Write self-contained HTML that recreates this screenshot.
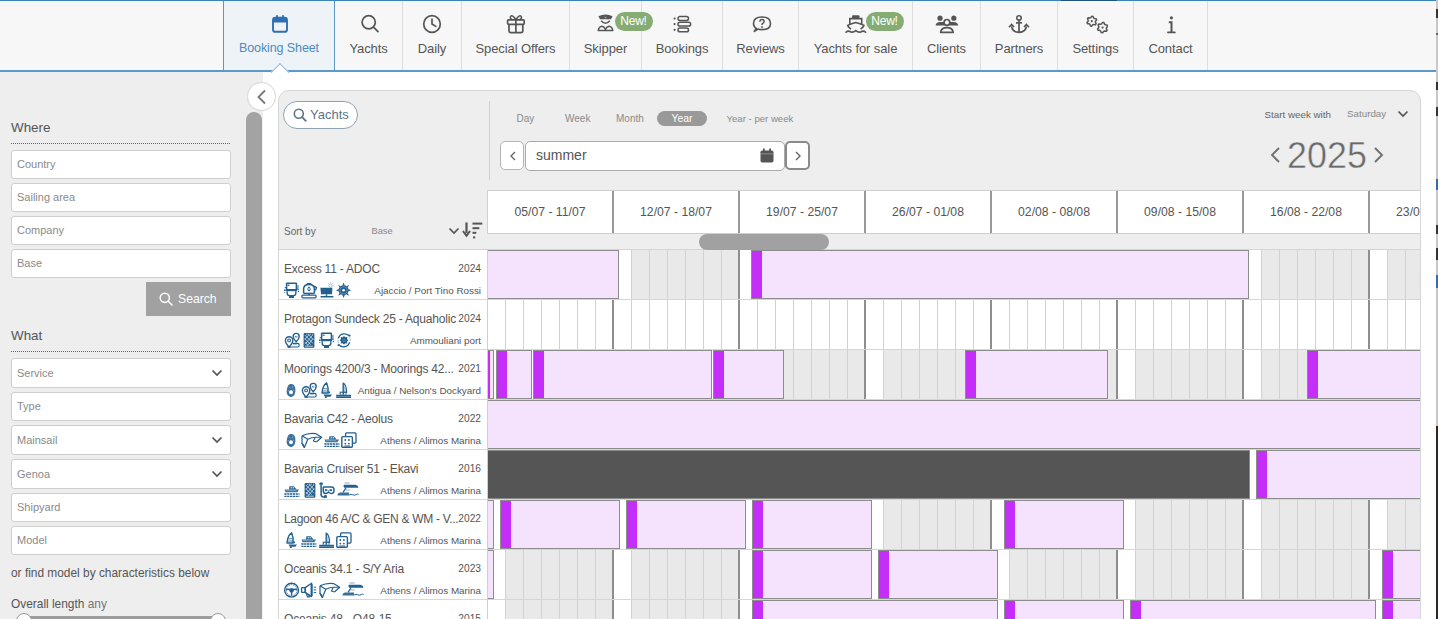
<!DOCTYPE html>
<html><head><meta charset="utf-8"><style>
*{box-sizing:border-box;margin:0;padding:0}
html,body{width:1438px;height:619px;overflow:hidden;background:#fff;font-family:"Liberation Sans",sans-serif;position:relative}
#nav{position:absolute;left:0;top:0;width:1436px;height:72px;background:#f7f7f7;border-top:1px solid #3a83bd;border-bottom:2px solid #5b9ac7}
.ni{position:absolute;top:0;height:69px;border-right:1px solid #dedede}
.ni.act{background:#eef3f8;border-left:1px solid #5b97c6;border-right:1px solid #5b97c6}
.nt{position:absolute;left:0;right:0;top:40px;text-align:center;font-size:13px;color:#555;white-space:nowrap;letter-spacing:-0.1px}
.ni.act .nt{color:#4d8ac4;font-size:12.5px}
.badge{position:absolute;top:11px;width:38px;height:19px;border-radius:10px;background:#85ad73;color:#fff;font-size:12px;line-height:19px;text-align:center;letter-spacing:-0.2px}
#notch{position:absolute;left:271px;top:62px;width:18px;height:10px;overflow:hidden}
#notch:before{content:"";position:absolute;left:2px;top:3px;width:13px;height:13px;background:#fff;border-left:1.2px solid #93badb;border-top:1.2px solid #93badb;transform:rotate(45deg)}
#side{position:absolute;left:0;top:72px;width:263px;height:547px;background:#eeeeee}
.h3{position:absolute;left:11px;font-size:13.4px;color:#555;padding-top:1.5px}
.dots{position:absolute;left:11px;width:220px;height:1px;background-image:linear-gradient(to right,#666 50%,transparent 50%);background-size:2px 1px}
.inp{position:absolute;left:11px;width:220px;background:#fff;border:1px solid #cfcfcf;border-radius:3px;font-size:11px;color:#8a8a8a;padding-left:5px}
.inp span{display:block}
#sbtn{position:absolute;left:146px;top:282px;width:85px;height:34px;background:#a1a1a1;color:#fff;font-size:12.2px}
#sbtn span{position:absolute;left:32px;top:10px}
.ptxt{position:absolute;left:11px;font-size:11.9px;color:#555;white-space:nowrap;padding-top:1.5px}
#track{position:absolute;left:20px;top:616px;width:200px;height:6px;background:#9c9c9c;border-radius:3px}
.knob{position:absolute;top:613px;width:16px;height:16px;border-radius:50%;background:#fff;border:1px solid #999}
#vthumb{position:absolute;left:246px;top:40px;width:16px;height:600px;background:#a3a3a3;border-radius:8px}
#side .h3,#side .dots,#side .inp,#side #sbtn,#side .ptxt,#side #track,#side .knob{margin-top:-72px}
#vthumb{top:40px}
#collapse{position:absolute;left:247px;top:82px;width:29px;height:29px;border-radius:50%;background:#fff;border:1px solid #dadada;box-shadow:0 0 1px rgba(0,0,0,.1)}
#panel{position:absolute;left:278px;top:90px;width:1143px;height:600px;background:#eeeeee;border:1px solid #d6d6d6;border-radius:11px}
#ypill{position:absolute;left:283px;top:101px;width:75px;height:28px;border-radius:14px;background:#fff;border:1px solid #8fa3b2;color:#5d7586;font-size:13px}
#ypill span{position:absolute;left:26px;top:5px}
.tab{position:absolute;top:112.5px;font-size:10px;color:#8a8a8a;white-space:nowrap}
.tab:last-of-type{}
#yearpill{position:absolute;left:657px;top:111px;width:50px;height:15px;border-radius:8px;background:#999;color:#fff;font-size:10.3px;line-height:15px;text-align:center}
.nbtn{position:absolute;top:141px;height:29px;background:#fff;border:1px solid #b5b5b5;border-radius:5px}
.nbtn.act2{border:2px solid #8a8a8a}
.nbtn.act2 svg{left:7px!important;top:8px!important}
#summer{position:absolute;left:525px;top:141px;width:260px;height:30px;background:#fff;border:1px solid #aaa;border-radius:5px}
#summer span{position:absolute;left:10px;top:5px;font-size:14px;color:#555}
.sm{position:absolute;font-size:9.8px;white-space:nowrap}
#year{position:absolute;left:1287px;top:136px;font-size:37px;color:#6a6a6a;-webkit-text-stroke:0.45px #eeeeee;paint-order:normal;line-height:40px;transform:scaleX(0.97);transform-origin:0 0}
#whead{position:absolute;left:487px;top:190px;width:933px;height:44px;background:#fff;border-top:1px solid #cfcfcf;border-bottom:1px solid #cfcfcf;border-left:1px solid #d0d0d0;
 background-image:linear-gradient(to right,transparent 124px,#999 124px,#999 126px);background-size:126px 100%;background-position:0 0}
#wclip{position:absolute;left:488px;top:191px;width:932px;height:42px;overflow:hidden}
.wk{position:absolute;top:14px;width:126px;margin-left:-1px;text-align:center;font-size:12.2px;color:#555;white-space:nowrap}
#hthumb{position:absolute;left:699px;top:234px;width:130px;height:16px;border-radius:8px;background:#a1a1a1;z-index:2}
#tseg{position:absolute;left:1061px;top:0;width:56px;height:1px;background:#1f5484}
#list{position:absolute;left:279px;top:249px;width:208px;height:400px;background:#fff;border-top:1px solid #d4d4d4}
.yr{position:absolute;left:0;width:208px;height:50px;border-bottom:1px solid #d8d8d8}
.yn{position:absolute;left:5px;top:11.5px;font-size:12px;letter-spacing:-0.2px;color:#555;white-space:nowrap}
.yy{position:absolute;right:6px;top:12.6px;font-size:10.2px;color:#555}
.yb{position:absolute;right:6px;top:34.6px;font-size:9.85px;color:#555;white-space:nowrap}
.ic{position:absolute;left:0;top:0}
#grid{position:absolute;left:487px;top:249px;width:933px;height:400px;overflow:hidden;border-top:1px solid #d4d4d4;border-left:1px solid #d0d0d0}
.row{position:absolute;left:0;width:932px;height:50px;background:#fff;border-bottom:1px solid #d6d6d6}
.gr{position:absolute;top:0;height:49px;background:#e9e9e9}
.lines{position:absolute;left:0;top:0;width:932px;height:49px;
 background-image:linear-gradient(to right,transparent 124px,#8e8e8e 124px,#8e8e8e 126px),linear-gradient(to right,transparent 17px,#d2d2d2 17px,#d2d2d2 18px);
 background-size:126px 100%,18px 100%;background-position:0 0,0 0}
.bx{position:absolute;top:0;height:49px;background:#f5e2fd;border:1px solid #8c8c8c}
.bx i{position:absolute;left:0;top:0;width:10px;height:47px;background:#c52ef8}
.bx.dk{background:#555;border-color:#8a8a8a}
#rstrip{position:absolute;left:1436px;top:0;width:2px;height:619px;background:#c8c8c8}

</style></head><body>
<div id="nav">
<div class="ni act" style="left:223px;width:112px"><svg width="20" height="20" viewBox="0 0 20 20" style="position:absolute;left:46.0px;top:13px"><rect x="3" y="3.8" width="14" height="14" rx="2.4" fill="none" stroke="#2f6fb3" stroke-width="1.9"/><rect x="3" y="3.8" width="14" height="4.8" rx="1.5" fill="#2f6fb3"/><rect x="6.1" y="1.2" width="1.8" height="4" fill="#2f6fb3"/><rect x="12.1" y="1.2" width="1.8" height="4" fill="#2f6fb3"/></svg><div class="nt">Booking Sheet</div></div>
<div class="ni" style="left:335px;width:68px"><svg width="22" height="22" viewBox="0 0 22 22" style="position:absolute;left:22.5px;top:10px"><circle cx="10.7" cy="11.3" r="6.6" fill="none" stroke="#555" stroke-width="1.7"/><line x1="15.5" y1="16.1" x2="20" y2="20.6" stroke="#555" stroke-width="1.7" stroke-linecap="round"/></svg><div class="nt">Yachts</div></div>
<div class="ni" style="left:403px;width:59px"><svg width="22" height="22" viewBox="0 0 22 22" style="position:absolute;left:18.0px;top:12px"><circle cx="11" cy="11" r="8.3" fill="none" stroke="#555" stroke-width="1.7"/><polyline points="11,6.2 11,11 14.8,13.4" fill="none" stroke="#555" stroke-width="1.7" stroke-linecap="round"/></svg><div class="nt">Daily</div></div>
<div class="ni" style="left:462px;width:108px"><svg width="20" height="20" viewBox="0 0 20 20" style="position:absolute;left:43.5px;top:12.5px"><rect x="1.6" y="5.8" width="16.6" height="4.5" rx="1" fill="none" stroke="#555" stroke-width="1.7"/><path d="M3 10.3 V16.8 Q3 18.6 4.8 18.6 H15 Q16.8 18.6 16.8 16.8 V10.3" fill="none" stroke="#555" stroke-width="1.7"/><line x1="9.9" y1="5.2" x2="9.9" y2="18.6" stroke="#555" stroke-width="1.7"/><path d="M9.9 5.6 C8 3 7 1.6 5.6 1.8 C3.6 2.2 4 5.6 6.4 5.6 M9.9 5.6 C11.8 3 12.8 1.6 14.2 1.8 C16.2 2.2 15.8 5.6 13.4 5.6" fill="none" stroke="#555" stroke-width="1.6"/></svg><div class="nt">Special Offers</div></div>
<div class="ni" style="left:570px;width:72px"><svg width="17" height="19" viewBox="0 0 18 20" style="position:absolute;left:26.7px;top:12.2px"><path d="M1.5 3.5 Q9 -0.5 16.5 3.5 L14.8 6.6 H3.2 Z" fill="#555"/><path d="M7.4 3.6 L9 4.6 L10.6 3.6 L9 5.4Z" fill="#f6f6f6"/><path d="M4.5 8.2 Q9 13.5 13.5 8.2" fill="none" stroke="#555" stroke-width="1.6"/><path d="M1.3 18.5 Q2 14.3 5.3 14 Q7.6 14.4 9 17.2 Q10.4 14.4 12.7 14 Q16 14.3 16.7 18.5 Z" fill="none" stroke="#555" stroke-width="1.6" stroke-linejoin="round"/></svg><div class="badge" style="left:44.5px">New!</div><div class="nt">Skipper</div></div>
<div class="ni" style="left:642px;width:81px"><svg width="20" height="20" viewBox="0 0 20 20" style="position:absolute;left:30.0px;top:13px"><circle cx="2.6" cy="4.5" r="1.1" fill="#555"/><circle cx="2.6" cy="10.1" r="1.1" fill="#555"/><circle cx="2.6" cy="15.8" r="1.1" fill="#555"/><rect x="6" y="2.6" width="10.5" height="3.9" rx="1.9" fill="none" stroke="#555" stroke-width="1.5"/><rect x="6" y="8.2" width="12.6" height="3.9" rx="1.9" fill="none" stroke="#555" stroke-width="1.5"/><rect x="6" y="13.9" width="10.5" height="3.9" rx="1.9" fill="none" stroke="#555" stroke-width="1.5"/></svg><div class="nt">Bookings</div></div>
<div class="ni" style="left:723px;width:76px"><svg width="20" height="20" viewBox="0 0 20 20" style="position:absolute;left:28.5px;top:13px"><path d="M4.2 14.5 Q1.5 12.6 1.5 9.4 Q1.5 3 10 3 Q18.5 3 18.5 9.4 Q18.5 15.6 10 15.6 Q7.6 15.6 6 15 L2.3 17.4 Z" fill="none" stroke="#555" stroke-width="1.6" stroke-linejoin="round"/><path d="M7.9 7.8 Q7.9 5.6 10 5.6 Q12.1 5.6 12.1 7.5 Q12.1 8.7 10.6 9.4 Q10 9.8 10 11" fill="none" stroke="#555" stroke-width="1.5"/><circle cx="10" cy="13" r="0.9" fill="#555"/></svg><div class="nt">Reviews</div></div>
<div class="ni" style="left:799px;width:114px"><svg width="22" height="20" viewBox="0 0 22 20" style="position:absolute;left:45.5px;top:13px"><rect x="7" y="1.3" width="7.5" height="3" rx="1" fill="#555"/><path d="M4.8 10 V4.6 H16.7 V10" fill="none" stroke="#555" stroke-width="1.6"/><path d="M6 15.2 Q2.8 12.8 2.6 11.4 Q5 10.2 10.8 8.6 Q16.6 10.2 19 11.4 Q18.8 12.8 15.6 15.2" fill="none" stroke="#555" stroke-width="1.6" stroke-linejoin="round"/><path d="M1 18.2 Q3 16.2 5.5 17.7 Q8 19 10.8 16.6 Q13.6 19 16.1 17.7 Q18.6 16.2 20.6 18.2" fill="none" stroke="#555" stroke-width="1.6" stroke-linecap="round"/></svg><div class="badge" style="left:66.5px">New!</div><div class="nt">Yachts for sale</div></div>
<div class="ni" style="left:913px;width:68px"><svg width="24" height="20" viewBox="0 0 24 20" style="position:absolute;left:21.5px;top:13px"><circle cx="5" cy="4.2" r="2.6" fill="#555"/><circle cx="18.8" cy="4.2" r="2.6" fill="#555"/><path d="M0.6 11.6 Q1 8 5 8 H9.4 V11.6 Z" fill="#555"/><path d="M23.2 11.6 Q22.8 8 18.8 8 H14.4 V11.6 Z" fill="#555"/><circle cx="11.9" cy="8.4" r="2.9" fill="none" stroke="#555" stroke-width="1.7"/><path d="M5.6 18.3 Q6.3 13.6 11.9 13.6 Q17.5 13.6 18.2 18.3 Z" fill="none" stroke="#555" stroke-width="1.7" stroke-linejoin="round"/></svg><div class="nt">Clients</div></div>
<div class="ni" style="left:981px;width:77px"><svg width="22" height="20" viewBox="0 0 22 20" style="position:absolute;left:27.0px;top:13px"><circle cx="11" cy="3.9" r="2.2" fill="none" stroke="#555" stroke-width="1.6"/><line x1="11" y1="6" x2="11" y2="18.2" stroke="#555" stroke-width="1.7"/><line x1="8" y1="8.8" x2="14" y2="8.8" stroke="#555" stroke-width="1.7"/><path d="M3.6 12.4 Q4.2 18.3 11 18.3 Q17.8 18.3 18.4 12.4" fill="none" stroke="#555" stroke-width="1.7"/><path d="M1 13.2 L3.6 10.4 L6 13" fill="none" stroke="#555" stroke-width="1.6"/><path d="M16 13 L18.4 10.4 L21 13.2" fill="none" stroke="#555" stroke-width="1.6"/></svg><div class="nt">Partners</div></div>
<div class="ni" style="left:1058px;width:76px"><svg width="24" height="22" viewBox="0 0 24 22" style="position:absolute;left:25.5px;top:12px"><g fill="none" stroke="#555" stroke-width="1.5" stroke-linejoin="round"><polygon points="7.80,3.20 9.09,3.37 9.65,5.00 10.42,5.58 12.13,5.70 12.63,6.91 11.50,8.20 11.37,9.16 12.13,10.70 11.34,11.74 9.65,11.40 8.76,11.77 7.80,13.20 6.51,13.03 5.95,11.40 5.18,10.82 3.47,10.70 2.97,9.49 4.10,8.20 4.23,7.24 3.47,5.70 4.26,4.66 5.95,5.00 6.84,4.63"/><polygon points="18.60,9.40 19.95,9.58 20.55,11.22 21.36,11.84 23.10,12.00 23.62,13.25 22.50,14.60 22.37,15.61 23.10,17.20 22.28,18.28 20.55,17.98 19.61,18.37 18.60,19.80 17.25,19.62 16.65,17.98 15.84,17.36 14.10,17.20 13.58,15.95 14.70,14.60 14.83,13.59 14.10,12.00 14.92,10.92 16.65,11.22 17.59,10.83"/></g><circle cx="7.8" cy="8.2" r="1.1" fill="#555"/><circle cx="18.6" cy="14.6" r="1.1" fill="#555"/></svg><div class="nt">Settings</div></div>
<div class="ni" style="left:1134px;width:74px"><svg width="12" height="20" viewBox="0 0 12 20" style="position:absolute;left:30.5px;top:13px"><circle cx="6.4" cy="3.8" r="1.6" fill="#555"/><path d="M3.8 8.2 H6.5 V18.2" fill="none" stroke="#555" stroke-width="2"/><line x1="3" y1="18.4" x2="9.8" y2="18.4" stroke="#555" stroke-width="1.8" stroke-linecap="round"/></svg><div class="nt">Contact</div></div>
<div id="notch"></div>
</div>
<div id="side">
<div class="h3" style="top:118px">Where</div><div class="dots" style="top:143px"></div>
<div class="inp" style="top:150px;height:29px"><span style="line-height:27px">Country</span></div>
<div class="inp" style="top:183px;height:29px"><span style="line-height:27px">Sailing area</span></div>
<div class="inp" style="top:216px;height:29px"><span style="line-height:27px">Company</span></div>
<div class="inp" style="top:249px;height:29px"><span style="line-height:27px">Base</span></div>
<div id="sbtn"><svg width="14" height="14" viewBox="0 0 14 14" style="position:absolute;left:13px;top:10px"><circle cx="5.8" cy="5.8" r="4.6" fill="none" stroke="#fff" stroke-width="1.5"/><line x1="9.2" y1="9.2" x2="13" y2="13" stroke="#fff" stroke-width="1.6" stroke-linecap="round"/></svg><span>Search</span></div>
<div class="h3" style="top:326px">What</div><div class="dots" style="top:351px"></div>
<div class="inp" style="top:358px;height:30px"><span style="line-height:28px">Service</span><svg width="12" height="8" viewBox="0 0 12 8" style="position:absolute;right:7px;top:10px"><polyline points="1.5,1.5 6,6 10.5,1.5" fill="none" stroke="#555" stroke-width="1.7"/></svg></div>
<div class="inp" style="top:392px;height:29px"><span style="line-height:27px">Type</span></div>
<div class="inp" style="top:425px;height:30px"><span style="line-height:28px">Mainsail</span><svg width="12" height="8" viewBox="0 0 12 8" style="position:absolute;right:7px;top:10px"><polyline points="1.5,1.5 6,6 10.5,1.5" fill="none" stroke="#555" stroke-width="1.7"/></svg></div>
<div class="inp" style="top:459px;height:30px"><span style="line-height:28px">Genoa</span><svg width="12" height="8" viewBox="0 0 12 8" style="position:absolute;right:7px;top:10px"><polyline points="1.5,1.5 6,6 10.5,1.5" fill="none" stroke="#555" stroke-width="1.7"/></svg></div>
<div class="inp" style="top:493px;height:29px"><span style="line-height:27px">Shipyard</span></div>
<div class="inp" style="top:526px;height:29px"><span style="line-height:27px">Model</span></div>
<div class="ptxt" style="top:564px">or find model by characteristics below</div>
<div class="ptxt" style="top:595px">Overall length <span style="color:#777">any</span></div>
<div id="track"></div><div class="knob" style="left:16px"></div><div class="knob" style="left:210px"></div>
<div id="vthumb"></div>
</div>
<div id="collapse"><svg width="12" height="16" viewBox="0 0 12 16" style="position:absolute;left:8px;top:5.5px"><polyline points="9,1.5 2.5,8 9,14.5" fill="none" stroke="#777" stroke-width="1.8"/></svg></div>
<div id="panel"></div>
<div id="ypill"><svg width="14" height="14" viewBox="0 0 14 14" style="position:absolute;left:9px;top:6px"><circle cx="5.8" cy="5.8" r="4.5" fill="none" stroke="#5d7586" stroke-width="1.6"/><line x1="9.1" y1="9.1" x2="12.8" y2="12.8" stroke="#5d7586" stroke-width="1.7" stroke-linecap="round"/></svg><span>Yachts</span></div>
<div style="position:absolute;left:489px;top:101px;width:1px;height:79px;background:#d0d0d0"></div>
<div class="tab" style="left:516.5px">Day</div>
<div class="tab" style="left:565px">Week</div>
<div class="tab" style="left:616px">Month</div>
<div class="tab" style="left:726.5px;font-size:9.6px;top:113px">Year - per week</div>
<div id="yearpill">Year</div>
<div class="nbtn" style="left:500px;width:24px"><svg width="8" height="10" viewBox="0 0 8 10" style="position:absolute;left:8px;top:9px"><polyline points="6,1 2,5 6,9" fill="none" stroke="#666" stroke-width="1.4"/></svg></div>
<div id="summer"><span>summer</span><svg width="14" height="15" viewBox="0 0 14 15" style="position:absolute;right:10px;top:6px"><rect x="0.5" y="2.5" width="13" height="12" rx="1.8" fill="#555"/><rect x="3" y="0.5" width="1.8" height="3" fill="#555"/><rect x="9.2" y="0.5" width="1.8" height="3" fill="#555"/><rect x="0.5" y="5.4" width="13" height="0.9" fill="#fff" opacity="0.35"/></svg></div>
<div class="nbtn act2" style="left:785px;width:25px"><svg width="8" height="10" viewBox="0 0 8 10" style="position:absolute;left:8px;top:9px"><polyline points="2,1 6,5 2,9" fill="none" stroke="#666" stroke-width="1.4"/></svg></div>
<div class="sm" style="left:1264.5px;top:109px;color:#666">Start week with</div>
<div class="sm" style="left:1347px;top:108px;color:#888">Saturday</div>
<svg width="12" height="8" viewBox="0 0 12 8" style="position:absolute;left:1397px;top:110px"><polyline points="1.5,1.5 6,6 10.5,1.5" fill="none" stroke="#555" stroke-width="1.7"/></svg>
<div id="year">2025</div>
<svg width="12" height="18" viewBox="0 0 12 18" style="position:absolute;left:1269px;top:146px"><polyline points="10,2 3,9 10,16" fill="none" stroke="#707070" stroke-width="1.9"/></svg>
<svg width="12" height="18" viewBox="0 0 12 18" style="position:absolute;left:1373px;top:146px"><polyline points="2,2 9,9 2,16" fill="none" stroke="#707070" stroke-width="1.9"/></svg>
<div class="sm" style="left:284px;top:226px;color:#666;font-size:10px">Sort by</div>
<div class="sm" style="left:371.5px;top:225.5px;color:#888;font-size:9.3px">Base</div>
<svg width="12" height="8" viewBox="0 0 12 8" style="position:absolute;left:448px;top:227px"><polyline points="1.5,1.5 6,6 10.5,1.5" fill="none" stroke="#555" stroke-width="1.7"/></svg>
<svg width="22" height="18" viewBox="0 0 22 18" style="position:absolute;left:461px;top:221px"><line x1="5.5" y1="1.5" x2="5.5" y2="12" stroke="#555" stroke-width="2.2"/><path d="M1.2 10.6 L5.5 16.6 L9.8 10.6 L8.3 9.6 L5.5 13 L2.7 9.6Z" fill="#555"/><line x1="11.5" y1="2.6" x2="21.3" y2="2.6" stroke="#555" stroke-width="2"/><line x1="11.5" y1="7.2" x2="18.3" y2="7.2" stroke="#555" stroke-width="2"/><line x1="11.5" y1="11.8" x2="15.3" y2="11.8" stroke="#555" stroke-width="2"/><line x1="12" y1="16.4" x2="14.2" y2="16.4" stroke="#555" stroke-width="2"/></svg>
<div id="whead"></div>
<div id="wclip">
<div class="wk" style="left:0px">05/07 - 11/07</div>
<div class="wk" style="left:126px">12/07 - 18/07</div>
<div class="wk" style="left:252px">19/07 - 25/07</div>
<div class="wk" style="left:378px">26/07 - 01/08</div>
<div class="wk" style="left:504px">02/08 - 08/08</div>
<div class="wk" style="left:630px">09/08 - 15/08</div>
<div class="wk" style="left:756px">16/08 - 22/08</div>
<div class="wk" style="left:882px">23/08 - 29/08</div>
</div>
<div id="list">
<div class="yr" style="top:0px"><div class="yn">Excess 11 - ADOC</div><div class="yy">2024</div><div class="yb">Ajaccio / Port Tino Rossi</div><div class="ic"><svg width="15" height="16" viewBox="0 0 15 16" style="position:absolute;left:5px;top:32px;overflow:visible"><g fill="none" stroke="#22608f" stroke-width="1.3" stroke-linejoin="round"><rect x="2.6" y="1.2" width="9.8" height="6.6" rx="0.4" stroke-width="1.5"/><rect x="3.6" y="2.6" width="2" height="1.2" fill="#22608f" stroke="none"/><rect x="2" y="7.6" width="11" height="1.6" fill="#22608f" stroke="none"/><path d="M3.2 9.2 V11.3 Q3.2 13.6 5.6 13.6 H9.4 Q11.8 13.6 11.8 11.3 V9.2" stroke-width="1.4"/><rect x="5" y="14" width="5" height="2" fill="#22608f" stroke="none"/><circle cx="1.3" cy="5.6" r="0.7" fill="#22608f" stroke="none"/><circle cx="0.9" cy="8.2" r="0.9" fill="#22608f" stroke="none"/><circle cx="0.9" cy="10.6" r="0.5" fill="#22608f" stroke="none"/><path d="M14 3 V7.5" stroke-width="0.9"/><path d="M12.8 6.6 L15 7.4 L14 8.6Z" fill="#22608f" stroke="none"/><circle cx="14.4" cy="9.5" r="0.7" fill="#22608f" stroke="none"/></g></svg><svg width="16" height="16" viewBox="0 0 16 16" style="position:absolute;left:22px;top:32px;overflow:visible"><g fill="none" stroke="#22608f" stroke-width="1.3" stroke-linejoin="round"><path d="M2.6 11.2 V7 Q2.6 2.4 8 2.4 Q13.4 2.4 13.4 7 V11.2" stroke-width="1.5"/><rect x="5.6" y="0.9" width="4.8" height="1.8" rx="0.9" fill="#22608f" stroke="none"/><path d="M8 4.8 Q9.6 6.4 9 8.4 Q8 9.4 7 8.4 Q6.4 6.4 8 4.8Z" stroke-width="1"/><path d="M2.6 11.4 H13.4" stroke-width="1.4"/><rect x="7.2" y="11.4" width="1.6" height="1.8" fill="#22608f" stroke="none"/><rect x="0.9" y="13.2" width="14.2" height="2.6" rx="1" stroke-width="1.3"/><path d="M13.2 4 L15.6 5.6 L14.4 8.6" stroke-width="1.3"/></g></svg><svg width="14" height="16" viewBox="0 0 14 16" style="position:absolute;left:40.5px;top:32px;overflow:visible"><g fill="none" stroke="#22608f" stroke-width="1.3" stroke-linejoin="round"><path d="M0.4 5.8 H12.4 L12 12.2 H1 Z" fill="#22608f" stroke="none"/><g fill="#fff"><circle cx="2.7" cy="7.6" r="0.65"/><circle cx="5.2" cy="7.6" r="0.65"/><circle cx="7.7" cy="7.6" r="0.65"/><circle cx="10.2" cy="7.6" r="0.65"/><circle cx="2.9" cy="10.3" r="0.65"/><circle cx="5.4" cy="10.3" r="0.65"/><circle cx="7.8" cy="10.3" r="0.65"/><circle cx="10.1" cy="10.3" r="0.65"/></g><path d="M6.5 12.2 V14.6 M0.6 14.8 H13.4" stroke-width="1.4"/><g opacity="0.45" stroke-width="0.9"><circle cx="10.6" cy="3.6" r="1.6"/><path d="M10.6 0.3 V1.2 M13.6 3.6 H12.8 M12.8 1.4 L12.2 2 M8.4 1.4 L9 2"/></g></g></svg><svg width="15" height="16" viewBox="0 0 15 16" style="position:absolute;left:57px;top:32px;overflow:visible"><g fill="none" stroke="#22608f" stroke-width="1.3" stroke-linejoin="round"><circle cx="7.6" cy="8.3" r="5" fill="#22608f" stroke="none"/><circle cx="7.6" cy="8.3" r="3.6" stroke="#fff" stroke-width="0.5" opacity="0.5"/><circle cx="7.6" cy="8.3" r="1.3" fill="#fff" stroke="none"/><g fill="#22608f" stroke="none"><path d="M6.4 3.6 L7.6 0.6 L8.8 3.6Z"/><path d="M6.4 13 L7.6 16 L8.8 13Z"/><path d="M2.9 7.1 L0 8.3 L2.9 9.5Z"/><path d="M12.3 7.1 L15.2 8.3 L12.3 9.5Z"/><path d="M3.5 5.6 L2.2 2.9 L4.9 4.2Z"/><path d="M11.7 5.6 L13 2.9 L10.3 4.2Z"/><path d="M3.5 11 L2.2 13.7 L4.9 12.4Z"/><path d="M11.7 11 L13 13.7 L10.3 12.4Z"/></g></g></svg></div></div>
<div class="yr" style="top:50px"><div class="yn">Protagon Sundeck 25 - Aquaholic</div><div class="yy">2024</div><div class="yb">Ammouliani port</div><div class="ic"><svg width="16" height="16" viewBox="0 0 16 16" style="position:absolute;left:4.5px;top:32px;overflow:visible"><g fill="none" stroke="#22608f" stroke-width="1.3" stroke-linejoin="round"><path d="M5.1 15.2 Q1.4 10.8 1.4 8.4 A3.7 3.7 0 0 1 8.8 8.4 Q8.8 10.8 5.1 15.2Z" stroke-width="1.4"/><circle cx="5.1" cy="8.4" r="1.4" stroke-width="1.1"/><rect x="3.4" y="14.4" width="3.4" height="1.4" fill="#22608f" stroke="none"/><path d="M12.2 9.8 Q9.2 6.6 9.2 4.4 A3 3 0 0 1 15.2 4.4 Q15.2 6.6 12.2 9.8Z" stroke-width="1.4"/><path d="M11.2 4.2 L12.2 5.4 L13.2 4.2" stroke-width="1"/><path d="M8.6 11.4 H13.6 Q15.2 11.4 15.2 13.2 Q15.2 15 13.6 15 H6.8" stroke-width="1.2"/><path d="M9 12.6 H13" stroke-width="0.8" opacity="0.5"/></g></svg><svg width="12" height="16" viewBox="0 0 12 16" style="position:absolute;left:24px;top:32px;overflow:visible"><g fill="none" stroke="#22608f" stroke-width="1.3" stroke-linejoin="round"><rect x="0.6" y="1" width="10.8" height="14.8" rx="1" fill="#22608f" stroke="none"/><g stroke="#fff" stroke-width="0.75" opacity="0.85"><path d="M1.8 3 L10 11.4 M1.8 6.6 L7.6 12.6 M1.8 10 L5 13.4 M5 2.2 L10.2 7.6 M10 2.6 L2 12.2 M6.4 2.2 L1.8 7.6 M10.2 6.4 L4.4 13.6 M2 14.2 H10"/><path d="M3 2.2 H10" stroke-dasharray="1 1"/></g></g></svg><svg width="15" height="16" viewBox="0 0 15 16" style="position:absolute;left:40px;top:32px;overflow:visible"><g fill="none" stroke="#22608f" stroke-width="1.3" stroke-linejoin="round"><rect x="2.6" y="1.2" width="9.8" height="6.6" rx="0.4" stroke-width="1.5"/><rect x="3.6" y="2.6" width="2" height="1.2" fill="#22608f" stroke="none"/><rect x="2" y="7.6" width="11" height="1.6" fill="#22608f" stroke="none"/><path d="M3.2 9.2 V11.3 Q3.2 13.6 5.6 13.6 H9.4 Q11.8 13.6 11.8 11.3 V9.2" stroke-width="1.4"/><rect x="5" y="14" width="5" height="2" fill="#22608f" stroke="none"/><circle cx="1.3" cy="5.6" r="0.7" fill="#22608f" stroke="none"/><circle cx="0.9" cy="8.2" r="0.9" fill="#22608f" stroke="none"/><circle cx="0.9" cy="10.6" r="0.5" fill="#22608f" stroke="none"/><path d="M14 3 V7.5" stroke-width="0.9"/><path d="M12.8 6.6 L15 7.4 L14 8.6Z" fill="#22608f" stroke="none"/><circle cx="14.4" cy="9.5" r="0.7" fill="#22608f" stroke="none"/></g></svg><svg width="14" height="16" viewBox="0 0 14 16" style="position:absolute;left:58px;top:32px;overflow:visible"><g fill="none" stroke="#22608f" stroke-width="1.3" stroke-linejoin="round"><path d="M12.4 4.2 A6.3 6.3 0 0 0 1.4 6.4" stroke-width="1.3"/><path d="M1.6 12.4 A6.3 6.3 0 0 0 12.6 10.2" stroke-width="1.3"/><path d="M1 7.6 A6.3 6.3 0 0 0 1.8 11" stroke-width="0.8" opacity="0.5"/><path d="M13.1 9 A6.3 6.3 0 0 0 12.6 5.2" stroke-width="0.8" opacity="0.5"/><path d="M11.2 2.4 L13.6 2.8 L13 5.2Z" fill="#22608f" stroke="none"/><path d="M2.8 14.2 L0.4 13.8 L1 11.4Z" fill="#22608f" stroke="none"/><path d="M7 3.9 L8.3 5.3 L10.3 5 L10 7 L11.3 8.3 L10 9.6 L10.3 11.6 L8.3 11.3 L7 12.7 L5.7 11.3 L3.7 11.6 L4 9.6 L2.7 8.3 L4 7 L3.7 5 L5.7 5.3Z" fill="#22608f" stroke="none"/><circle cx="7" cy="8.3" r="1.3" stroke="#6b9bc0" stroke-width="0.6"/></g></svg></div></div>
<div class="yr" style="top:100px"><div class="yn">Moorings 4200/3 - Moorings 42...</div><div class="yy">2021</div><div class="yb">Antigua / Nelson's Dockyard</div><div class="ic"><svg width="10" height="16" viewBox="0 0 10 16" style="position:absolute;left:7px;top:32px;overflow:visible"><g fill="none" stroke="#22608f" stroke-width="1.3" stroke-linejoin="round"><path d="M4.8 2 Q8.2 1.8 9.2 5.4 Q10 9.4 8.6 12.6 Q7 15.6 4 14.8 Q0.8 13.6 0.6 9.8 Q0.6 5.6 2.4 3.2 Q3.4 2.1 4.8 2Z" fill="#22608f" stroke="none" opacity="0.9"/><circle cx="5" cy="10.2" r="2" fill="#fff" stroke="none"/><g stroke="#fff" stroke-width="0.6" opacity="0.6"><path d="M3 4.6 L4.4 6.4 M7 4 L6.4 6.4 M8.4 8 L6.8 8.6 M1.6 8.4 L3.2 9"/></g></g></svg><svg width="16" height="16" viewBox="0 0 16 16" style="position:absolute;left:22px;top:32px;overflow:visible"><g fill="none" stroke="#22608f" stroke-width="1.3" stroke-linejoin="round"><path d="M5.1 15.2 Q1.4 10.8 1.4 8.4 A3.7 3.7 0 0 1 8.8 8.4 Q8.8 10.8 5.1 15.2Z" stroke-width="1.4"/><circle cx="5.1" cy="8.4" r="1.4" stroke-width="1.1"/><rect x="3.4" y="14.4" width="3.4" height="1.4" fill="#22608f" stroke="none"/><path d="M12.2 9.8 Q9.2 6.6 9.2 4.4 A3 3 0 0 1 15.2 4.4 Q15.2 6.6 12.2 9.8Z" stroke-width="1.4"/><path d="M11.2 4.2 L12.2 5.4 L13.2 4.2" stroke-width="1"/><path d="M8.6 11.4 H13.6 Q15.2 11.4 15.2 13.2 Q15.2 15 13.6 15 H6.8" stroke-width="1.2"/><path d="M9 12.6 H13" stroke-width="0.8" opacity="0.5"/></g></svg><svg width="11" height="16" viewBox="0 0 11 16" style="position:absolute;left:42px;top:32px;overflow:visible"><g fill="none" stroke="#22608f" stroke-width="1.3" stroke-linejoin="round"><path d="M5.6 0.8 Q1.6 3.2 1 11 H7 Q7.6 5.4 5.6 0.8Z" stroke-width="1.4"/><path d="M2.2 6.8 H6.4 M1.6 9 H7" stroke-width="1.1" opacity="0.8"/><path d="M7 9.6 H9 V11.2 H7" fill="#22608f" stroke="none"/><path d="M2.4 12.4 H11 L9.4 14.8 H4 Z" fill="#22608f" stroke="none"/><rect x="3.8" y="14.6" width="2" height="1.4" fill="#22608f" stroke="none"/></g></svg><svg width="15" height="16" viewBox="0 0 15 16" style="position:absolute;left:57px;top:32px;overflow:visible"><g fill="none" stroke="#22608f" stroke-width="1.3" stroke-linejoin="round"><path d="M7.2 0.8 V12.6" stroke-width="1.4"/><path d="M7.4 1 Q10.6 3.8 10.6 10.4 H7.4" stroke-width="1.2"/><path d="M8 3.4 Q9.8 5.6 9.8 9.6 H8Z" fill="#22608f" opacity="0.35" stroke="none"/><path d="M3.6 9.6 H10.6 V12.6 H3.6Z" fill="#22608f" stroke="none" opacity="0.85"/><rect x="5" y="10.9" width="1.5" height="1.7" fill="#fff" stroke="none"/><rect x="8" y="10.9" width="1.5" height="1.7" fill="#fff" stroke="none"/><path d="M0.2 13.4 H15 M0.2 15.3 H15" stroke-width="1.5"/></g></svg></div></div>
<div class="yr" style="top:150px"><div class="yn">Bavaria C42 - Aeolus</div><div class="yy">2022</div><div class="yb">Athens / Alimos Marina</div><div class="ic"><svg width="10" height="16" viewBox="0 0 10 16" style="position:absolute;left:7px;top:32px;overflow:visible"><g fill="none" stroke="#22608f" stroke-width="1.3" stroke-linejoin="round"><path d="M4.8 2 Q8.2 1.8 9.2 5.4 Q10 9.4 8.6 12.6 Q7 15.6 4 14.8 Q0.8 13.6 0.6 9.8 Q0.6 5.6 2.4 3.2 Q3.4 2.1 4.8 2Z" fill="#22608f" stroke="none" opacity="0.9"/><circle cx="5" cy="10.2" r="2" fill="#fff" stroke="none"/><g stroke="#fff" stroke-width="0.6" opacity="0.6"><path d="M3 4.6 L4.4 6.4 M7 4 L6.4 6.4 M8.4 8 L6.8 8.6 M1.6 8.4 L3.2 9"/></g></g></svg><svg width="21" height="16" viewBox="0 0 21 16" style="position:absolute;left:22px;top:32px;overflow:visible"><g fill="none" stroke="#22608f" stroke-width="1.3" stroke-linejoin="round"><path d="M1 3.8 Q8 0.4 14.6 1.6 L20.6 5.2 L15.4 10" stroke-width="1.2"/><path d="M1 3.8 L6.8 7.2 Q10.6 5.4 14.6 5.2 L20.6 5.2" stroke-width="1.1"/><path d="M1 3.8 V11.2 L3.4 15.4 L6.8 7.2" stroke-width="1.2"/><path d="M14.2 5.6 L12.4 9 L15.4 10" stroke-width="1.1"/><path d="M1 11.2 L3.4 15.4" stroke-width="1.6"/></g></svg><svg width="15" height="16" viewBox="0 0 15 16" style="position:absolute;left:45px;top:32px;overflow:visible"><g fill="none" stroke="#22608f" stroke-width="1.3" stroke-linejoin="round"><path d="M5.4 4.2 H9.8 L12.6 7.4 H5Z" fill="#22608f" stroke="none"/><rect x="6.6" y="5.2" width="1.2" height="1.2" fill="#fff" stroke="none"/><rect x="8.6" y="5.2" width="1.2" height="1.2" fill="#fff" stroke="none"/><path d="M0.6 7.4 H15 L13.4 10.2 H1.4Z" fill="#22608f" stroke="none" opacity="0.88"/><path d="M2 8.6 H12" stroke="#fff" stroke-width="0.5" opacity="0.6"/><path d="M0.4 12 H15.4 M0.4 14.4 H15.4" stroke-width="1.4" stroke-dasharray="2.2 0.6"/></g></svg><svg width="16" height="16" viewBox="0 0 16 16" style="position:absolute;left:62px;top:32px;overflow:visible"><g fill="none" stroke="#22608f" stroke-width="1.3" stroke-linejoin="round"><rect x="4.6" y="0.9" width="10.4" height="10.2" rx="1" stroke-width="1.3"/><rect x="0.8" y="4.6" width="10.6" height="10.6" rx="1" fill="#fff" stroke-width="1.4"/><circle cx="4.3" cy="8" r="0.9" fill="#22608f" stroke="none"/><circle cx="7.9" cy="8" r="0.9" fill="#22608f" stroke="none"/><circle cx="4.3" cy="11.6" r="0.9" fill="#22608f" stroke="none"/><circle cx="7.9" cy="11.6" r="0.9" fill="#22608f" stroke="none"/><path d="M3.4 14 H9" stroke-width="1"/></g></svg></div></div>
<div class="yr" style="top:200px"><div class="yn">Bavaria Cruiser 51 - Ekavi</div><div class="yy">2016</div><div class="yb">Athens / Alimos Marina</div><div class="ic"><svg width="15" height="16" viewBox="0 0 15 16" style="position:absolute;left:5px;top:32px;overflow:visible"><g fill="none" stroke="#22608f" stroke-width="1.3" stroke-linejoin="round"><path d="M5.4 4.2 H9.8 L12.6 7.4 H5Z" fill="#22608f" stroke="none"/><rect x="6.6" y="5.2" width="1.2" height="1.2" fill="#fff" stroke="none"/><rect x="8.6" y="5.2" width="1.2" height="1.2" fill="#fff" stroke="none"/><path d="M0.6 7.4 H15 L13.4 10.2 H1.4Z" fill="#22608f" stroke="none" opacity="0.88"/><path d="M2 8.6 H12" stroke="#fff" stroke-width="0.5" opacity="0.6"/><path d="M0.4 12 H15.4 M0.4 14.4 H15.4" stroke-width="1.4" stroke-dasharray="2.2 0.6"/></g></svg><svg width="11" height="16" viewBox="0 0 11 16" style="position:absolute;left:24.5px;top:32px;overflow:visible"><g fill="none" stroke="#22608f" stroke-width="1.3" stroke-linejoin="round"><rect x="0.6" y="1" width="10.8" height="14.8" rx="1" fill="#22608f" stroke="none"/><g stroke="#fff" stroke-width="0.75" opacity="0.85"><path d="M1.8 3 L10 11.4 M1.8 6.6 L7.6 12.6 M1.8 10 L5 13.4 M5 2.2 L10.2 7.6 M10 2.6 L2 12.2 M6.4 2.2 L1.8 7.6 M10.2 6.4 L4.4 13.6 M2 14.2 H10"/><path d="M3 2.2 H10" stroke-dasharray="1 1"/></g></g></svg><svg width="15" height="16" viewBox="0 0 15 16" style="position:absolute;left:40px;top:32px;overflow:visible"><g fill="none" stroke="#22608f" stroke-width="1.3" stroke-linejoin="round"><path d="M2.1 2.4 V12.6 Q2.1 15 4.4 15 H7.4" stroke-width="1.5"/><rect x="0.4" y="0.6" width="3.4" height="2.2" rx="0.6" fill="#22608f" stroke="none"/><path d="M4.4 5 H12.8 Q15 5 15 8 Q15 11.6 12.4 11.6 Q10.4 11.4 9.6 10 Q8.6 11.4 6.6 11.6 Q4.2 11.6 4.2 8 Z" stroke-width="1.5"/><circle cx="7" cy="8.2" r="1.1" fill="#22608f" stroke="none"/><circle cx="12" cy="8.2" r="1.1" fill="#22608f" stroke="none"/><path d="M8.4 8 L9.6 8.8 L10.8 8" stroke-width="0.9"/><rect x="5.2" y="13" width="2.6" height="3" rx="0.8" fill="#22608f" stroke="none"/></g></svg><svg width="22" height="16" viewBox="0 0 22 16" style="position:absolute;left:58px;top:32px;overflow:visible"><g fill="none" stroke="#22608f" stroke-width="1.3" stroke-linejoin="round"><path d="M6.8 2.8 H18.4 Q21.2 3.2 21.6 5.8 H7.2 Q6 4.2 6.8 2.8Z" fill="#22608f" stroke="none"/><path d="M7.6 1 H12.6" stroke-width="0.9" opacity="0.6"/><path d="M9 5.8 L6 10.4" stroke-width="1.2"/><path d="M8.6 8 H13" stroke-width="0.9" opacity="0.5"/><path d="M0.4 13.6 Q0.8 10.6 3.4 10.6 H12 V13.6 Z" fill="#22608f" stroke="none" opacity="0.9"/><path d="M12.2 13 Q14 11.6 15.8 12.8 Q17.6 13.8 19.6 12.4 Q20.6 11.8 21.6 12.4" stroke-width="1"/></g></svg></div></div>
<div class="yr" style="top:250px"><div class="yn"><span style="letter-spacing:-0.3px">Lagoon 46 A/C &amp; GEN &amp; WM - V...</span></div><div class="yy">2022</div><div class="yb">Athens / Alimos Marina</div><div class="ic"><svg width="12" height="16" viewBox="0 0 12 16" style="position:absolute;left:6.5px;top:32px;overflow:visible"><g fill="none" stroke="#22608f" stroke-width="1.3" stroke-linejoin="round"><path d="M5.6 0.8 Q1.6 3.2 1 11 H7 Q7.6 5.4 5.6 0.8Z" stroke-width="1.4"/><path d="M2.2 6.8 H6.4 M1.6 9 H7" stroke-width="1.1" opacity="0.8"/><path d="M7 9.6 H9 V11.2 H7" fill="#22608f" stroke="none"/><path d="M2.4 12.4 H11 L9.4 14.8 H4 Z" fill="#22608f" stroke="none"/><rect x="3.8" y="14.6" width="2" height="1.4" fill="#22608f" stroke="none"/></g></svg><svg width="16" height="16" viewBox="0 0 16 16" style="position:absolute;left:22px;top:32px;overflow:visible"><g fill="none" stroke="#22608f" stroke-width="1.3" stroke-linejoin="round"><path d="M5.4 4.2 H9.8 L12.6 7.4 H5Z" fill="#22608f" stroke="none"/><rect x="6.6" y="5.2" width="1.2" height="1.2" fill="#fff" stroke="none"/><rect x="8.6" y="5.2" width="1.2" height="1.2" fill="#fff" stroke="none"/><path d="M0.6 7.4 H15 L13.4 10.2 H1.4Z" fill="#22608f" stroke="none" opacity="0.88"/><path d="M2 8.6 H12" stroke="#fff" stroke-width="0.5" opacity="0.6"/><path d="M0.4 12 H15.4 M0.4 14.4 H15.4" stroke-width="1.4" stroke-dasharray="2.2 0.6"/></g></svg><svg width="15" height="16" viewBox="0 0 15 16" style="position:absolute;left:40px;top:32px;overflow:visible"><g fill="none" stroke="#22608f" stroke-width="1.3" stroke-linejoin="round"><path d="M7.2 0.8 V12.6" stroke-width="1.4"/><path d="M7.4 1 Q10.6 3.8 10.6 10.4 H7.4" stroke-width="1.2"/><path d="M8 3.4 Q9.8 5.6 9.8 9.6 H8Z" fill="#22608f" opacity="0.35" stroke="none"/><path d="M3.6 9.6 H10.6 V12.6 H3.6Z" fill="#22608f" stroke="none" opacity="0.85"/><rect x="5" y="10.9" width="1.5" height="1.7" fill="#fff" stroke="none"/><rect x="8" y="10.9" width="1.5" height="1.7" fill="#fff" stroke="none"/><path d="M0.2 13.4 H15 M0.2 15.3 H15" stroke-width="1.5"/></g></svg><svg width="15" height="16" viewBox="0 0 15 16" style="position:absolute;left:57px;top:32px;overflow:visible"><g fill="none" stroke="#22608f" stroke-width="1.3" stroke-linejoin="round"><rect x="4.6" y="0.9" width="10.4" height="10.2" rx="1" stroke-width="1.3"/><rect x="0.8" y="4.6" width="10.6" height="10.6" rx="1" fill="#fff" stroke-width="1.4"/><circle cx="4.3" cy="8" r="0.9" fill="#22608f" stroke="none"/><circle cx="7.9" cy="8" r="0.9" fill="#22608f" stroke="none"/><circle cx="4.3" cy="11.6" r="0.9" fill="#22608f" stroke="none"/><circle cx="7.9" cy="11.6" r="0.9" fill="#22608f" stroke="none"/><path d="M3.4 14 H9" stroke-width="1"/></g></svg></div></div>
<div class="yr" style="top:300px"><div class="yn">Oceanis 34.1 - S/Y Aria</div><div class="yy">2023</div><div class="yb">Athens / Alimos Marina</div><div class="ic"><svg width="15" height="16" viewBox="0 0 15 16" style="position:absolute;left:5px;top:32px;overflow:visible"><g fill="none" stroke="#22608f" stroke-width="1.3" stroke-linejoin="round"><circle cx="7.6" cy="8.2" r="6.9" stroke-width="1.4"/><circle cx="7.6" cy="8.2" r="5.4" stroke-width="0.8" stroke-dasharray="1.2 0.8"/><path d="M2 7.4 H13.2" stroke-width="1.6"/><circle cx="7.6" cy="8.4" r="2.2" fill="#22608f" stroke="none"/><path d="M7.6 9 V13.6" stroke-width="1.4"/></g></svg><svg width="16" height="16" viewBox="0 0 16 16" style="position:absolute;left:22px;top:32px;overflow:visible"><g fill="none" stroke="#22608f" stroke-width="1.3" stroke-linejoin="round"><rect x="0.6" y="5.6" width="3.6" height="4.8" rx="0.6" stroke-width="1.3"/><path d="M4.2 5.6 L10.6 1.2 V14.6 L4.2 10.4Z" stroke-width="1.3"/><path d="M5 10.6 L6.4 14.8 H8.4 L7.6 11.8" stroke-width="1.2"/><path d="M10.6 2 V14" stroke-width="2"/><path d="M12.6 5.2 H15.2 M12.6 7.9 H15.2 M12.6 10.6 H15.2" stroke-width="1"/></g></svg><svg width="21" height="16" viewBox="0 0 21 16" style="position:absolute;left:40px;top:32px;overflow:visible"><g fill="none" stroke="#22608f" stroke-width="1.3" stroke-linejoin="round"><path d="M1 3.8 Q8 0.4 14.6 1.6 L20.6 5.2 L15.4 10" stroke-width="1.2"/><path d="M1 3.8 L6.8 7.2 Q10.6 5.4 14.6 5.2 L20.6 5.2" stroke-width="1.1"/><path d="M1 3.8 V11.2 L3.4 15.4 L6.8 7.2" stroke-width="1.2"/><path d="M14.2 5.6 L12.4 9 L15.4 10" stroke-width="1.1"/><path d="M1 11.2 L3.4 15.4" stroke-width="1.6"/></g></svg><svg width="22" height="16" viewBox="0 0 22 16" style="position:absolute;left:63px;top:32px;overflow:visible"><g fill="none" stroke="#22608f" stroke-width="1.3" stroke-linejoin="round"><path d="M6.8 2.8 H18.4 Q21.2 3.2 21.6 5.8 H7.2 Q6 4.2 6.8 2.8Z" fill="#22608f" stroke="none"/><path d="M7.6 1 H12.6" stroke-width="0.9" opacity="0.6"/><path d="M9 5.8 L6 10.4" stroke-width="1.2"/><path d="M8.6 8 H13" stroke-width="0.9" opacity="0.5"/><path d="M0.4 13.6 Q0.8 10.6 3.4 10.6 H12 V13.6 Z" fill="#22608f" stroke="none" opacity="0.9"/><path d="M12.2 13 Q14 11.6 15.8 12.8 Q17.6 13.8 19.6 12.4 Q20.6 11.8 21.6 12.4" stroke-width="1"/></g></svg></div></div>
<div class="yr" style="top:350px"><div class="yn">Oceanis 48 - O48-15</div><div class="yy">2015</div><div class="yb"></div><div class="ic"></div></div>
</div>
<div id="grid">
<div class="row" style="top:0px">
<div class="gr" style="left:143px;width:107px"></div>
<div class="gr" style="left:773px;width:107px"></div>
<div class="gr" style="left:899px;width:33px"></div>
<div class="lines"></div>
<div class="bx" style="left:-1px;width:132px"></div>
<div class="bx" style="left:263px;width:498px"><i></i></div>
</div>
<div class="row" style="top:50px">
<div class="lines"></div>
</div>
<div class="row" style="top:100px">
<div class="gr" style="left:296px;width:81px"></div>
<div class="gr" style="left:395px;width:82px"></div>
<div class="gr" style="left:620px;width:9px"></div>
<div class="gr" style="left:647px;width:108px"></div>
<div class="gr" style="left:773px;width:46px"></div>
<div class="lines"></div>
<div class="bx" style="left:-1px;width:7px"><i style="width:1.5px"></i></div>
<div class="bx" style="left:8px;width:36px"><i></i></div>
<div class="bx" style="left:45px;width:179px"><i></i></div>
<div class="bx" style="left:225px;width:71px"><i></i></div>
<div class="bx" style="left:477px;width:143px"><i></i></div>
<div class="bx" style="left:819px;width:133px"><i></i></div>
</div>
<div class="row" style="top:150px">
<div class="lines"></div>
<div class="bx" style="left:-1px;width:953px"></div>
</div>
<div class="row" style="top:200px">
<div class="lines"></div>
<div class="bx dk" style="left:-1px;width:763px"></div>
<div class="bx" style="left:768px;width:184px"><i></i></div>
</div>
<div class="row" style="top:250px">
<div class="gr" style="left:395px;width:108px"></div>
<div class="gr" style="left:647px;width:108px"></div>
<div class="gr" style="left:773px;width:108px"></div>
<div class="gr" style="left:899px;width:33px"></div>
<div class="lines"></div>
<div class="bx" style="left:-1px;width:7px"></div>
<div class="bx" style="left:12px;width:120px"><i></i></div>
<div class="bx" style="left:138px;width:120px"><i></i></div>
<div class="bx" style="left:264px;width:120px"><i></i></div>
<div class="bx" style="left:516px;width:120px"><i></i></div>
</div>
<div class="row" style="top:300px">
<div class="gr" style="left:17px;width:108px"></div>
<div class="gr" style="left:143px;width:108px"></div>
<div class="gr" style="left:521px;width:108px"></div>
<div class="gr" style="left:647px;width:108px"></div>
<div class="gr" style="left:773px;width:108px"></div>
<div class="lines"></div>
<div class="bx" style="left:-1px;width:7px"></div>
<div class="bx" style="left:264px;width:120px"><i></i></div>
<div class="bx" style="left:390px;width:120px"><i></i></div>
<div class="bx" style="left:894px;width:58px"><i></i></div>
</div>
<div class="row" style="top:350px">
<div class="gr" style="left:17px;width:108px"></div>
<div class="gr" style="left:143px;width:108px"></div>
<div class="lines"></div>
<div class="bx" style="left:264px;width:246px"><i></i></div>
<div class="bx" style="left:516px;width:120px"><i></i></div>
<div class="bx" style="left:642px;width:246px"><i></i></div>
<div class="bx" style="left:894px;width:58px"><i></i></div>
</div>
</div>
<div id="hthumb"></div>
<div id="rstrip"></div><div style="position:absolute;left:1436px;top:9px;width:2px;height:9px;background:#333"></div><div style="position:absolute;left:1436px;top:33px;width:2px;height:2px;background:#666"></div><div style="position:absolute;left:1436px;top:82px;width:2px;height:8px;background:#333"></div><div style="position:absolute;left:1436px;top:107px;width:2px;height:9px;background:#333"></div><div style="position:absolute;left:1436px;top:179px;width:2px;height:11px;background:#2f6db5"></div><div style="position:absolute;left:1436px;top:225px;width:2px;height:9px;background:#333"></div><div style="position:absolute;left:1436px;top:248px;width:2px;height:12px;background:#333"></div><div style="position:absolute;left:1436px;top:275px;width:2px;height:13px;background:#2f6db5"></div><div style="position:absolute;left:1436px;top:426px;width:2px;height:193px;background:#2e2721"></div><div id="tseg"></div>
</body></html>
